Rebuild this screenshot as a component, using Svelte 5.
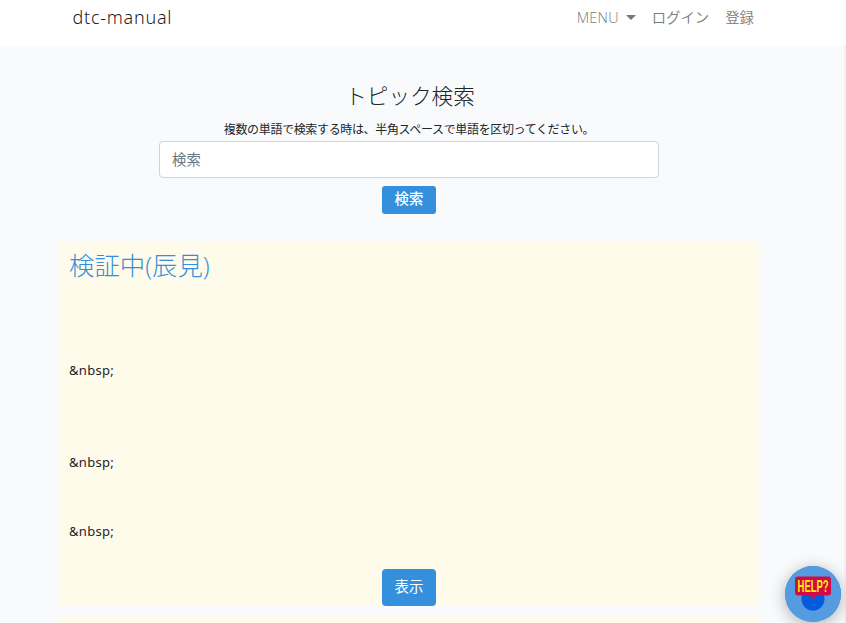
<script>
  const lines = ['', '', '', '&nbsp;', '', '', '', '&nbsp;', '', '', '&nbsp;'];
</script>

<div class="app">
  <nav>
    <a class="brand" href="#top">dtc-manual</a>
    <div class="links">
      <a class="menu" href="#menu"><span>MENU</span><i class="caret"></i></a>
      <a class="login" href="#login">ログイン</a>
      <a href="#register">登録</a>
    </div>
  </nav>
  <main>
    <form onsubmit={(e) => e.preventDefault()}>
      <h1><span>トピック検索</span></h1>
      <p class="hint"><span>複数の単語で検索する時は、半角スペースで単語を区切ってください。</span></p>
      <input type="text" placeholder="検索" />
      <button class="search">検索</button>
    </form>
    <article>
      <h2><a href="#topic">検証中(辰見)</a></h2>
      <div class="body">
        {#each lines as line}
          <p>{line}</p>
        {/each}
      </div>
      <button class="show">表示</button>
    </article>
    <article></article>
  </main>
  <div class="edge"></div>
  <button class="help" aria-label="HELP">
    <svg width="56" height="56" viewBox="0 0 56 56">
      <circle cx="28" cy="28" r="28" fill="#569be0" />
      <circle cx="28" cy="33" r="11.5" fill="#045bdc" />
      <path d="M13 10.5h30q3 0 3 3v13q0 3-3 3H31l-3 4-3-4H13q-3 0-3-3v-13q0-3 3-3z" fill="#d10b45" />
      <text transform="translate(12.6 25.5) scale(0.59 1)">HELP?</text>
    </svg>
  </button>
</div>

<style>
  :global(body) {
    margin: 0;
    overflow: hidden;
  }
  .app {
    position: relative;
    box-sizing: border-box;
    width: 846px;
    height: 623px;
    overflow: hidden;
    background: #f8fafc;
    color: #212529;
    font-family: 'Open Sans', 'Noto Sans CJK JP', sans-serif;
    font-weight: 350;
  }
  h1, h2, p {
    margin: 0;
    font-weight: 300;
  }
  a {
    text-decoration: none;
  }
  nav {
    display: flex;
    justify-content: space-between;
    box-sizing: border-box;
    height: 46px;
    padding: 0 92px 0 72.5px;
    background: #fff;
    line-height: 35px;
  }
  .brand {
    color: #000000e6;
    font-family: 'Noto Sans', sans-serif;
    font-size: 18px;
    font-weight: 350;
    letter-spacing: 0.75px;
  }
  .links {
    display: flex;
    align-items: flex-start;
    font-size: 14.4px;
  }
  .links a {
    color: #7a7a7a;
  }
  .menu {
    display: flex;
    align-items: center;
    justify-content: space-between;
    width: 59px;
    margin-right: 16px;
    letter-spacing: 0.3px;
  }
  .caret {
    border: 4.5px solid transparent;
    border-width: 5px 5px 0;
    border-top-color: #777;
  }
  .login {
    margin-right: 16px;
  }
  main {
    display: flex;
    flex-direction: column;
    gap: 10px;
    width: 700px;
    margin-left: 59px;
    padding-top: 33px;
  }
  form {
    display: flex;
    flex-direction: column;
    align-items: center;
    height: 153px;
  }
  h1 {
    height: 41px;
    padding-left: 2px;
    font-size: 21.6px;
    line-height: 33px;
    font-weight: 300;
  }
  .hint {
    height: 21px;
    font-size: 12px;
    line-height: 19px;
    letter-spacing: -0.35px;
    font-weight: 400;
    white-space: nowrap;
  }
  input {
    box-sizing: border-box;
    width: 500px;
    height: 37px;
    padding: 0 12px;
    border: 1px solid #ced4da;
    border-radius: 4px;
    background: #fff;
    font: 400 14.4px 'Open Sans', 'Noto Sans CJK JP', sans-serif;
  }
  input::placeholder {
    color: #6c757d;
    opacity: 1;
  }
  button {
    display: block;
    width: 54px;
    padding: 0;
    border: 0;
    background: #3490dc;
    color: #fff;
    font: 400 14.4px 'Noto Sans CJK JP', sans-serif;
  }
  .search {
    height: 28px;
    margin-top: 8px;
    padding-bottom: 4px;
    border-radius: 3px;
    line-height: 24px;
    font-weight: 500;
  }
  article {
    box-sizing: border-box;
    height: 364px;
    padding: 7px 10px 0;
    border-radius: 4px;
    background: #fffbeb;
  }
  h2 {
    height: 41px;
    font-size: 25.4px;
    line-height: 32px;
  }
  h2 a {
    color: #3490dc;
  }
  .body {
    height: 279px;
    font-family: 'Noto Sans', sans-serif;
    font-size: 13px;
    line-height: 23px;
    letter-spacing: 0.3px;
  }
  .body p {
    height: 23px;
    font-weight: 400;
  }
  .show {
    height: 37px;
    margin: 0 auto;
    padding-bottom: 3px;
    border-radius: 4px;
    line-height: 34px;
  }
  .edge {
    position: absolute;
    top: 46px;
    right: 0;
    bottom: 0;
    width: 2px;
    background: #f1f2f4;
  }
  .help {
    position: absolute;
    left: 785px;
    top: 566px;
    width: 56px;
    height: 56px;
    border-radius: 50%;
    box-shadow: 0 3px 16px #0000004d;
  }
  .help svg {
    display: block;
    overflow: visible;
  }
  .help text {
    fill: #fff000;
    font: 700 16px 'Liberation Sans', sans-serif;
  }
</style>
